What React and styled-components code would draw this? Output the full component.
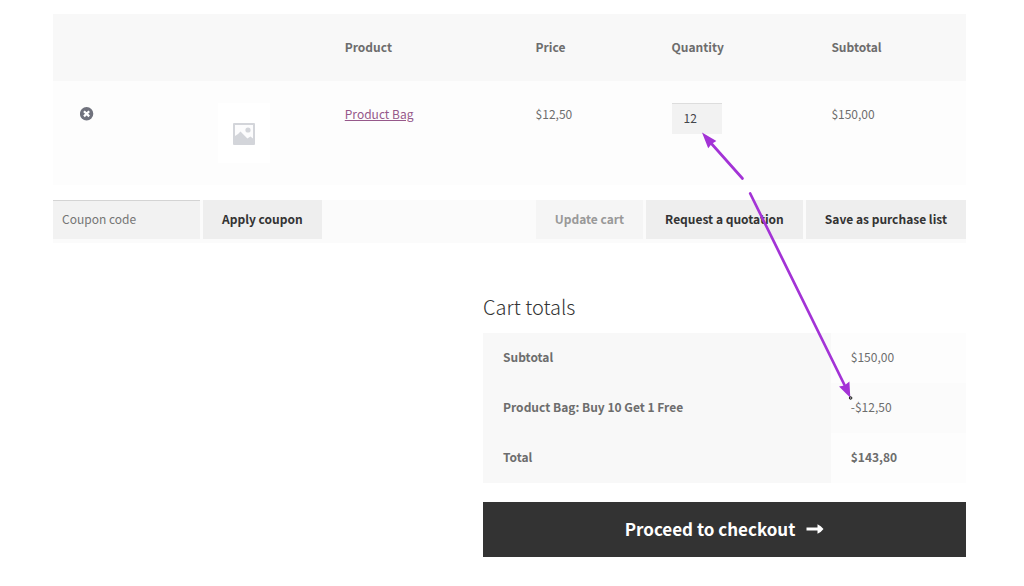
import React from "react";
import styled, { createGlobalStyle } from "styled-components";

const columns = ["15.1%", "13.9%", "20.9%", "14.9%", "17.5%", "17.7%"];

const totals = [
  { label: "Subtotal", value: "$150,00" },
  { label: "Product Bag: Buy 10 Get 1 Free", value: "-$12,50", shade: true },
  { label: "Total", value: "$143,80", strong: true },
];

const App = () => {
  return (
    <Page>
      <GlobalStyle />
      <form onSubmit={(e) => e.preventDefault()}>
        <CartTable>
          <colgroup>
            {columns.map((width, i) => (
              <Col key={i} $width={width} />
            ))}
          </colgroup>
          <thead>
            <tr>
              <HeadCell as="td" />
              <HeadCell as="td" />
              <HeadCell scope="col">Product</HeadCell>
              <HeadCell scope="col">Price</HeadCell>
              <HeadCell scope="col">Quantity</HeadCell>
              <HeadCell scope="col">Subtotal</HeadCell>
            </tr>
          </thead>
          <tbody>
            <tr>
              <Cell>
                <RemoveButton type="button" aria-label="Remove this item">
                  <svg width="14" height="14" viewBox="0 0 14 14">
                    <circle cx="6.6" cy="6.8" r="6.7" fill="#70727d" />
                    <path
                      d="M4 4.2l5.2 5.2M9.2 4.2l-5.2 5.2"
                      stroke="#fff"
                      strokeWidth="2.2"
                    />
                  </svg>
                </RemoveButton>
              </Cell>
              <Cell>
                <Thumbnail>
                  <svg width="22" height="22" viewBox="0 0 22 22">
                    <rect width="22" height="22" rx="1" fill="#d3d5da" />
                    <path
                      d="M2 2h18v13.5l-2.6-2-3 2L7.5 8.5 5 11 2 13z"
                      fill="#fcfcfd"
                    />
                    <circle cx="15" cy="7" r="2.6" fill="#d3d5da" />
                  </svg>
                </Thumbnail>
              </Cell>
              <Cell>
                <ProductLink href="#">Product Bag</ProductLink>
              </Cell>
              <Cell>$12,50</Cell>
              <Cell>
                <Quantity type="text" aria-label="Quantity" defaultValue="12" />
              </Cell>
              <Cell>$150,00</Cell>
            </tr>
          </tbody>
        </CartTable>

        <Actions>
          <Group>
            <Coupon type="text" aria-label="Coupon code" placeholder="Coupon code" />
            <Button type="submit">Apply coupon</Button>
          </Group>
          <Group>
            <Button type="button" disabled>
              Update cart
            </Button>
            <Button type="button">Request a quotation</Button>
            <Button type="button">Save as purchase list</Button>
          </Group>
        </Actions>
      </form>

      <Totals>
        <Title>Cart totals</Title>
        <TotalsTable>
          <tbody>
            {totals.map((row) => (
              <tr key={row.label}>
                <TotalLabel scope="row">{row.label}</TotalLabel>
                <TotalValue $shade={row.shade} $strong={row.strong}>
                  {row.value}
                </TotalValue>
              </tr>
            ))}
          </tbody>
        </TotalsTable>
        <Checkout type="button">
          Proceed to checkout
          <svg width="18" height="12" viewBox="0 0 18 12">
            <path
              d="M0.5 4.6h11V1.2q3.5 1.5 6 4.8q-2.5 3.3-6 4.8V7.4h-11z"
              fill="#fff"
            />
          </svg>
        </Checkout>
      </Totals>

      <Arrows width="1024" height="586" viewBox="0 0 1024 586" aria-hidden="true">
        <g stroke="#a333d6" strokeWidth="2.7" strokeLinecap="round">
          <path d="M710 142L742.5 178.5" />
          <path d="M750.2 193.5L845 386" />
        </g>
        <path d="M702 132.6L716.4 141L711.8 143.8L708.2 148.2z" fill="#a333d6" />
        <path d="M850.3 397.8L839 386.6L844.5 385.5L849.4 381.6z" fill="#a333d6" />
        <circle cx="850.6" cy="398" r="1.3" fill="#999" stroke="#222" />
      </Arrows>
    </Page>
  );
};

const GlobalStyle = createGlobalStyle`
  * {
    box-sizing: border-box;
  }
  body {
    margin: 0;
    background: #ffffff;
    color: #6d6d6d;
    font-family: "Noto Sans CJK SC", "Open Sans", sans-serif;
    font-size: 12px;
    line-height: 22px;
  }
  button,
  input {
    font: inherit;
    border: 0;
    border-radius: 0;
    margin: 0;
  }
`;
const Page = styled("main")`
  position: relative;
  padding: 14px 58px 29px 53px;
`;
const CartTable = styled("table")`
  width: 100%;
  table-layout: fixed;
  border-collapse: collapse;
  text-align: left;
`;
const Col = styled("col")`
  width: ${(props) => props.$width};
`;
const HeadCell = styled("th")`
  padding: 22px 27px 23px;
  background: #f8f8f8;
  font-weight: 600;
`;
const Cell = styled("td")`
  padding: 22px 0 22px 27px;
  background: #fdfdfd;
  vertical-align: top;
`;
const RemoveButton = styled("button")`
  display: flex;
  align-items: center;
  height: 22px;
  padding: 0;
  background: none;
  cursor: pointer;
`;
const Thumbnail = styled("div")`
  display: flex;
  align-items: center;
  justify-content: center;
  width: 52px;
  height: 60px;
  padding-top: 2px;
  background: #ffffff;
`;
const ProductLink = styled("a")`
  color: #96588a;
  text-decoration: underline;
`;
const Quantity = styled("input")`
  display: block;
  width: 50px;
  height: 31px;
  padding: 0 12px 3px;
  background: #f2f2f2;
  border-top: 1px solid #dddddd;
  color: #43454b;
`;
const Actions = styled("div")`
  display: flex;
  justify-content: space-between;
  margin-top: 15px;
  padding-bottom: 4px;
  background: #fbfbfb;
`;
const Group = styled("div")`
  display: flex;
  gap: 3px;
`;
const Coupon = styled("input")`
  width: 147px;
  height: 39px;
  padding: 0 9px 3px;
  background: #f2f2f2;
  border-top: 1px solid #d4d4d4;
  color: #43454b;
  &::placeholder {
    color: #757575;
    opacity: 1;
  }
`;
const Button = styled("button")`
  height: 39px;
  padding: 0 19px 2px;
  background: #eeeeee;
  color: #333333;
  font-weight: 600;
  cursor: pointer;
  &:disabled {
    background: #f5f5f5;
    color: #999999;
    cursor: default;
  }
`;
const Totals = styled("section")`
  width: 52.9%;
  margin: 47px 0 0 auto;
`;
const Title = styled("h2")`
  margin: 0 0 9px;
  color: #333333;
  font-size: 20px;
  font-weight: 300;
  line-height: 34px;
`;
const TotalsTable = styled("table")`
  width: 100%;
  border-collapse: collapse;
  text-align: left;
`;
const TotalLabel = styled("th")`
  width: 72%;
  height: 50px;
  padding: 0 20px 2px;
  background: #f8f8f8;
  font-weight: 600;
`;
const TotalValue = styled("td")`
  padding: 0 20px 2px;
  background: ${(props) => (props.$shade ? "#fbfbfb" : "#fdfdfd")};
  font-weight: ${(props) => (props.$strong ? 600 : 400)};
`;
const Checkout = styled("button")`
  display: flex;
  align-items: center;
  justify-content: center;
  gap: 11px;
  width: 100%;
  height: 55px;
  margin-top: 19px;
  padding: 0 0 2px;
  background: #333333;
  color: #ffffff;
  font-size: 17px;
  font-weight: 600;
  cursor: pointer;
`;
const Arrows = styled("svg")`
  position: absolute;
  top: 0;
  left: 0;
  pointer-events: none;
`;
export default App;
